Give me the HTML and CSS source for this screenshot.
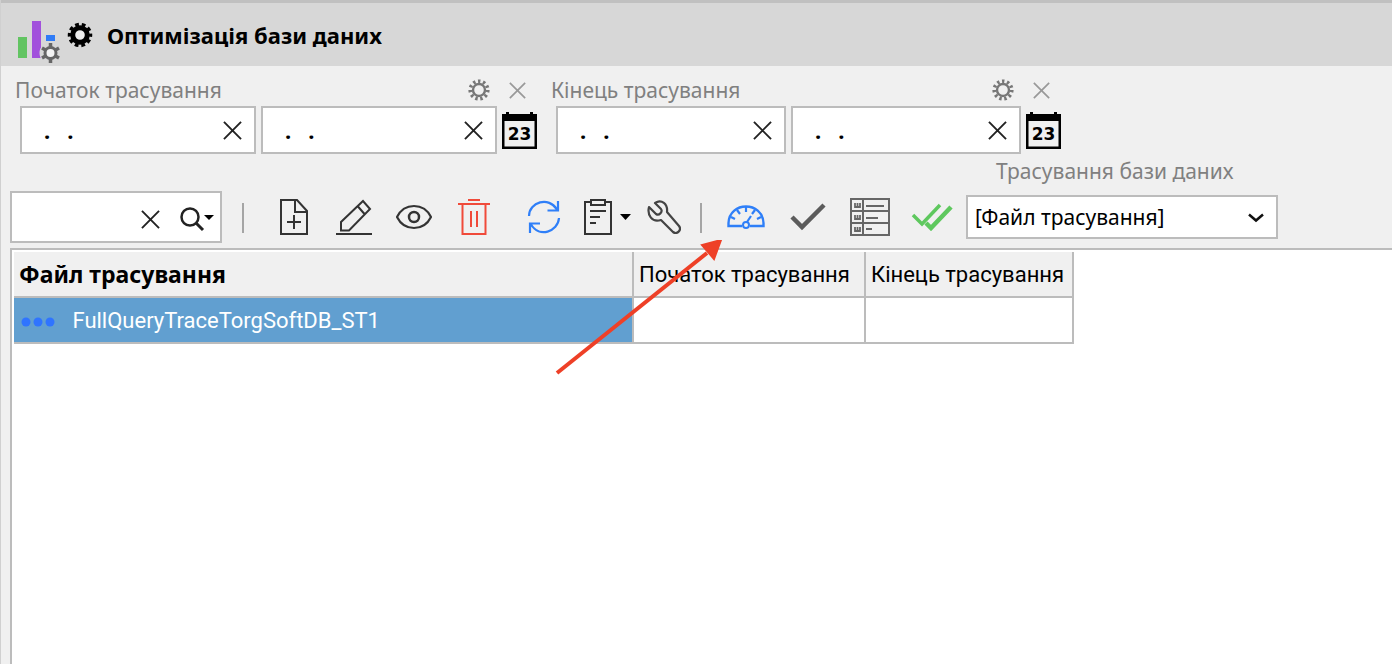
FILE: index.html
```html
<!DOCTYPE html>
<html lang="uk">
<head>
    <meta charset="UTF-8">
    <meta name="viewport" content="width=device-width, initial-scale=1.0">
    <title>Оптимізація бази даних</title>
    <link rel="stylesheet" href="styles.css">
</head>
<body>
    <!-- shared shapes -->
    <svg class="sprite" aria-hidden="true">
        <symbol id="cross" viewBox="0 0 20 20">
            <path d="M1 1L19 19M19 1L1 19" fill="none" stroke="currentColor"/>
        </symbol>
        <symbol id="gear" viewBox="0 0 22 22">
            <circle cx="11" cy="11" r="6" fill="none" stroke="currentColor" stroke-width="2.400"/>
            <circle cx="11" cy="11" r="8.8" fill="none" stroke="currentColor" stroke-width="3.6" stroke-dasharray="2.400 2.627"/>
        </symbol>
    </svg>

    <header class="title-bar">
        <svg class="logo" viewBox="0 0 44 44">
            <path d="M1 18h9v21H1z" fill="#62c462"/>
            <path d="M15 2h9v37h-9z" fill="#a251dc"/>
            <path d="M29 16h9v6h-9z" fill="#2f7bf6"/>
            <circle cx="33.500" cy="34" r="11" fill="#d7d7d7"/>
            <circle cx="33.500" cy="34" r="5.500" fill="#f4f4f4" stroke="#666" stroke-width="3"/>
            <path d="M33.500 24v4M33.500 40v4M25 29l3.500 2M38.500 37l3.500 2M25 39l3.500-2M38.500 31l3.500-2" stroke="#666" stroke-width="3.500"/>
        </svg>
        <svg class="title-gear" viewBox="0 0 26 26">
            <circle cx="13" cy="13" r="7.300" fill="#eee" stroke="#000" stroke-width="5"/>
            <circle cx="13" cy="13" r="10.500" fill="none" stroke="#000" stroke-width="3.500" stroke-dasharray="3.700 2.897" stroke-dashoffset="1.850"/>
        </svg>
        <h1>Оптимізація бази даних</h1>
    </header>

    <div class="filters">
        <div class="period">
            <div class="period-head">
                <label for="start-date">Початок трасування</label>
                <button class="small-btn" aria-label="Налаштувати початок"><svg class="gear"><use href="#gear"/></svg></button>
                <button class="small-btn" aria-label="Очистити початок"><svg class="small-cross"><use href="#cross"/></svg></button>
            </div>
            <div class="period-row">
                <div class="date-box">
                    <input type="text" id="start-date" value=".   .">
                    <button aria-label="Очистити дату"><svg class="cross"><use href="#cross"/></svg></button>
                </div>
                <div class="date-box">
                    <input type="text" aria-label="Початок трасування, по" value=".   .">
                    <button aria-label="Очистити дату"><svg class="cross"><use href="#cross"/></svg></button>
                </div>
                <button class="calendar-btn" aria-label="Календар">
                    <svg viewBox="0 0 35 37">
                        <path d="M4 0h3v2h21V0h3v2h4v35H0V2h4z"/>
                        <path d="M2.500 9h30v25.500h-30z" fill="#f0f0f0"/>
                        <text x="17.500" y="28" class="calendar-day">23</text>
                    </svg>
                </button>
            </div>
        </div>
        <div class="period period-end">
            <div class="period-head">
                <label for="end-date">Кінець трасування</label>
                <button class="small-btn" aria-label="Налаштувати кінець"><svg class="gear"><use href="#gear"/></svg></button>
                <button class="small-btn" aria-label="Очистити кінець"><svg class="small-cross"><use href="#cross"/></svg></button>
            </div>
            <div class="period-row">
                <div class="date-box">
                    <input type="text" id="end-date" value=".   .">
                    <button aria-label="Очистити дату"><svg class="cross"><use href="#cross"/></svg></button>
                </div>
                <div class="date-box">
                    <input type="text" aria-label="Кінець трасування, по" value=".   .">
                    <button aria-label="Очистити дату"><svg class="cross"><use href="#cross"/></svg></button>
                </div>
                <button class="calendar-btn" aria-label="Календар">
                    <svg viewBox="0 0 35 37">
                        <path d="M4 0h3v2h21V0h3v2h4v35H0V2h4z"/>
                        <path d="M2.500 9h30v25.500h-30z" fill="#f0f0f0"/>
                        <text x="17.500" y="28" class="calendar-day">23</text>
                    </svg>
                </button>
            </div>
        </div>
    </div>

    <div class="toolbar">
        <div class="search">
            <input type="text" aria-label="Пошук">
            <button aria-label="Очистити пошук"><svg class="cross"><use href="#cross"/></svg></button>
            <button aria-label="Шукати">
                <svg class="search-icon" viewBox="0 0 36 26">
                    <circle cx="11" cy="11" r="8.500" fill="none" stroke="#222" stroke-width="2.500"/>
                    <path d="M17 17l7 7" stroke="#222" stroke-width="3"/>
                    <path d="M25 9h10l-5 5z"/>
                </svg>
            </button>
        </div>
        <span class="divider"></span>
        <div class="tools">
            <button class="tool" aria-label="Додати">
                <svg width="30" height="38" viewBox="0 0 30 38">
                    <path d="M2 2h16l10 11v23H2zM16 2v12h12M15 17v14M8 24h14" fill="none" stroke="#333" stroke-width="2"/>
                </svg>
            </button>
            <button class="tool" aria-label="Редагувати">
                <svg width="36" height="38" viewBox="0 0 36 38">
                    <path d="M0 36h36" stroke="#333" stroke-width="2"/>
                    <path d="M5 24L27 3l7 8L13 32.500H5zM21.500 8l7 8" fill="none" stroke="#333" stroke-width="2"/>
                </svg>
            </button>
            <button class="tool" aria-label="Переглянути">
                <svg width="36" height="26" viewBox="0 0 36 26">
                    <path d="M1 13C5 5 11 2 18 2s13 3 17 11c-4 8-10 11-17 11S5 21 1 13z" fill="none" stroke="#333" stroke-width="2.200"/>
                    <circle cx="18" cy="13" r="5" fill="none" stroke="#333" stroke-width="2.500"/>
                </svg>
            </button>
            <button class="tool" aria-label="Видалити">
                <svg width="32" height="38" viewBox="0 0 32 38">
                    <path d="M10 2h12M0 6h32M4.500 6v30h23V6M13 13v16M19 13v16" fill="none" stroke="#f04a3a" stroke-width="2"/>
                </svg>
            </button>
        </div>
        <div class="tools">
            <button class="tool" aria-label="Оновити">
                <svg width="34" height="34" viewBox="0 0 34 34">
                    <path d="M2 16C2 2 22-4 30 9.500M31 1v9.500H20.500M32 18C31 32 12 38 4 24.500M3 33v-9.500h10" fill="none" stroke="#2f7ff8" stroke-width="2.200"/>
                </svg>
            </button>
            <button class="tool" aria-label="Звіти">
                <svg width="54" height="38" viewBox="-6 0 54 38">
                    <path d="M7 4H2v32h26V4h-5M8 2h14v5H8zM7 13h16M7 19h10M7 25h6" fill="none" stroke="#333" stroke-width="2"/>
                    <path d="M37 16h11l-5.500 6z"/>
                </svg>
            </button>
            <button class="tool" aria-label="Налаштування">
                <svg width="34" height="34" viewBox="0 0 34 34">
                    <path d="M10 2C14 0 21 3 20 12L32 26c3 4-2 9-6 6L14 20C5 23 0 15 2 7l7 7c3 2 7-2 5-5L8 3z" fill="none" stroke="#444" stroke-width="2.200" stroke-linejoin="round"/>
                </svg>
            </button>
        </div>
        <span class="divider divider-small"></span>
        <div class="tools tools-wide">
            <button class="tool" aria-label="Трасування">
                <svg width="38" height="24" viewBox="0 0 38 24">
                    <path d="M15 21H1.500v-3c1-22 34-22 35 0v3H23" fill="none" stroke="#2f7ff8" stroke-width="2.400"/>
                    <circle cx="19" cy="20" r="3" fill="none" stroke="#2f7ff8" stroke-width="2"/>
                    <path d="M20 17l4-6M19 2v5M10 5l3 4M28 5l-3 4M4 12l4 2M34 12l-4 2" stroke="#2f7ff8" stroke-width="2.200"/>
                </svg>
            </button>
            <button class="tool" aria-label="Застосувати">
                <svg width="36" height="28" viewBox="0 0 36 28">
                    <path d="M2 14l10 10L34 2" fill="none" stroke="#5c5c5c" stroke-width="4.500"/>
                </svg>
            </button>
            <button class="tool" aria-label="Список">
                <svg width="40" height="38" viewBox="0 0 40 38">
                    <path d="M1 1h38v36H1zM1 13h38M1 25h38M13 1v36M16 8h18M16 20h12M16 31h6" fill="none" stroke="#666" stroke-width="2"/>
                    <path d="M5 5v4h5V5M7.500 5v4M5 17v4h5v-4M7.500 17v4M5 29v4h5v-4M7.500 29v4" fill="none" stroke="#666" stroke-width="1.800"/>
                </svg>
            </button>
            <button class="tool" aria-label="Застосувати все">
                <svg width="42" height="28" viewBox="0 0 42 28">
                    <path d="M2 12l9 9L29 2" fill="none" stroke="#5ec85e" stroke-width="3.500"/>
                    <path d="M15 20l5 5L40 4" fill="none" stroke="#5ec85e" stroke-width="4.500"/>
                </svg>
            </button>
        </div>
        <div class="trace-field">
            <label for="trace-type">Трасування бази даних</label>
            <div class="select-box">
                <select id="trace-type">
                    <option>[Файл трасування]</option>
                </select>
                <svg class="chevron" viewBox="0 0 16 10"><path d="M1 1.500l7 6 7-6" fill="none" stroke="#111" stroke-width="2.500"/></svg>
            </div>
        </div>
    </div>

    <main class="panel">
        <table>
            <thead>
                <tr>
                    <th class="col-file">Файл трасування</th>
                    <th class="col-start">Початок трасування</th>
                    <th class="col-end">Кінець трасування</th>
                </tr>
            </thead>
            <tbody>
                <tr>
                    <td class="selected">
                        <svg class="dots" viewBox="0 0 34 10">
                            <g fill="#2f74ff">
                                <circle cx="5" cy="5" r="4.500"/>
                                <circle cx="17" cy="5" r="4.500"/>
                                <circle cx="29" cy="5" r="4.500"/>
                            </g>
                        </svg>
                        FullQueryTraceTorgSoftDB_ST1
                    </td>
                    <td></td>
                    <td></td>
                </tr>
            </tbody>
        </table>
    </main>

    <svg class="arrow" viewBox="0 0 168 136">
        <path d="M2 133L152 13" stroke="#ee4027" stroke-width="4"/>
        <path d="M166 0L147 5l12 14z" fill="#ee4027" stroke="#ee4027" stroke-width="2"/>
    </svg>
</body>
</html>
```
FILE: styles.css
```css
* {
    padding: 0;
    margin: 0;
    box-sizing: border-box;
}

body {
    min-height: 100vh;
    display: flex;
    flex-direction: column;
    position: relative;
    background-color: #f0f0f0;
    border-left: 1px solid #d0d0d0;
    font-family: "Noto Sans", Tahoma, sans-serif;
    font-size: 21px;
    color: #000000;
}

button {
    display: flex;
    justify-content: center;
    align-items: center;
    background: none;
    border: none;
    color: #222222;
}

input, select {
    font: inherit;
    color: inherit;
    border: none;
    outline: none;
    background: none;
}

svg {
    display: block;
    flex-shrink: 0;
}

.sprite {
    position: absolute;
    width: 0;
    height: 0;
}

.title-bar {
    display: flex;
    align-items: center;
    height: 66px;
    padding: 0 16px;
    background-color: #d7d7d7;
    border-top: 3px solid #c0c0c0;
}

.title-bar h1 {
    font-size: 22px;
    font-weight: bold;
    margin-left: 14px;
}

.logo {
    width: 44px;
    height: 44px;
    margin-top: 12px;
}

.title-gear {
    width: 26px;
    height: 26px;
    margin-left: 6px;
}

.filters {
    display: flex;
    gap: 14px;
    padding: 8px 14px 0;
}

.period {
    width: 522px;
}

.period-end {
    width: 510px;
}

.period-head {
    display: flex;
    align-items: center;
    height: 32px;
    color: #808080;
}

.period-head label {
    flex: 1;
}

.small-btn {
    width: 39px;
    height: 30px;
    color: #777777;
}

.gear {
    width: 22px;
    height: 22px;
}

.small-cross {
    width: 17px;
    height: 17px;
    stroke-width: 2;
    color: #999999;
}

.period-row {
    display: flex;
    gap: 5px;
    padding-left: 5px;
}

.date-box {
    display: flex;
    flex: 1;
    min-width: 0;
    height: 48px;
    background-color: #ffffff;
    border: 2px solid #bcbcbc;
}

.date-box input {
    flex: 1;
    min-width: 0;
    padding-left: 22px;
    font-size: 22px;
    font-weight: bold;
}

.date-box button {
    width: 44px;
}

.cross {
    width: 19px;
    height: 19px;
    stroke-width: 2;
}

.calendar-btn svg {
    width: 35px;
    height: 37px;
}

.calendar-day {
    font-family: "DejaVu Sans", sans-serif;
    font-size: 17px;
    font-weight: bold;
    text-anchor: middle;
}

.toolbar {
    display: flex;
    align-items: flex-end;
    padding: 5px 9px 5px;
}

.search {
    display: flex;
    width: 212px;
    height: 52px;
    background-color: #ffffff;
    border: 2px solid #bcbcbc;
}

.search input {
    flex: 1;
    min-width: 0;
    padding-left: 8px;
}

.search button {
    padding: 4px 5px 0 14px;
}

.search-icon {
    width: 36px;
    height: 26px;
}

.divider {
    width: 2px;
    height: 30px;
    margin: 0 20px 10px;
    background-color: #a5a5a5;
}

.divider-small {
    margin: 0 13px 10px 6px;
}

.tools {
    display: flex;
}

.tools + .tools {
    margin-left: 10px;
}

.tool {
    width: 60px;
    height: 52px;
}

.tools-wide {
    margin-right: 3px;
}

.tools-wide .tool {
    width: 62px;
}

.trace-field {
    width: 312px;
    margin-bottom: 4px;
}

.trace-field label {
    display: block;
    height: 36px;
    padding-left: 30px;
    line-height: 24px;
    color: #808080;
}

.select-box {
    position: relative;
}

.select-box select {
    width: 100%;
    height: 44px;
    padding-left: 7px;
    appearance: none;
    background-color: #ffffff;
    border: 2px solid #bcbcbc;
}

.chevron {
    position: absolute;
    right: 14px;
    top: 18px;
    width: 16px;
    height: 10px;
    pointer-events: none;
}

.panel {
    flex: 1;
    margin-left: 9px;
    padding: 2px;
    background-color: #ffffff;
    border-top: 2px solid #bcbcbc;
    border-left: 2px solid #bcbcbc;
}

table {
    border-collapse: separate;
    border-spacing: 0;
    font-family: Roboto, "Liberation Sans", sans-serif;
    font-size: 22px;
}

th, td {
    height: 46px;
    padding-left: 5px;
    text-align: left;
    white-space: nowrap;
    border-right: 2px solid #bcbcbc;
    border-bottom: 2px solid #bcbcbc;
}

th {
    font-weight: normal;
    background-color: #f0f0f0;
}

.col-file {
    width: 620px;
    font-family: "Noto Sans", sans-serif;
    font-size: 23px;
    line-height: 30px;
    font-weight: bold;
}

.col-start {
    width: 232px;
}

.col-end {
    width: 208px;
}

.selected {
    padding-left: 7px;
    color: #ffffff;
    background-color: #619fd0;
}

.dots {
    display: inline-block;
    width: 34px;
    height: 10px;
    margin-right: 12px;
    vertical-align: middle;
}

.arrow {
    position: absolute;
    left: 554px;
    top: 240px;
    width: 168px;
    height: 136px;
    pointer-events: none;
}
```
